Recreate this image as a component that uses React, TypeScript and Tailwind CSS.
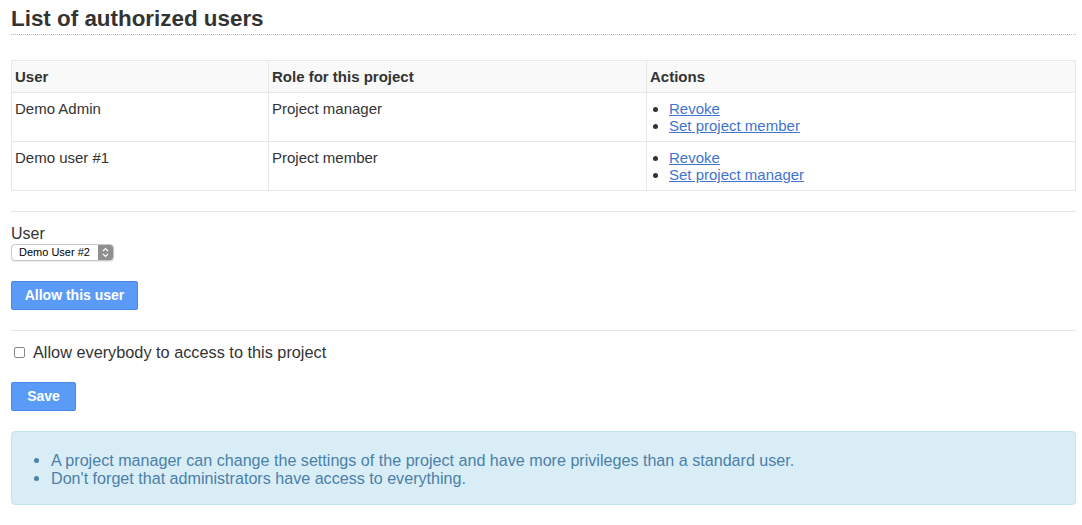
export default function App() {
  return (
    <div className="min-h-screen bg-white pl-[11px] pr-[6px] pt-[5px] text-[15px] text-[#333] font-['Liberation_Sans',Arial,sans-serif]">
      <h2 className="border-b border-dotted border-[#bbb] pb-[2px] text-[22.4px] font-bold leading-[27px] text-[#333]">
        List of authorized users
      </h2>

      <table className="mt-[25px] w-full border-collapse border border-[#e8e8e8] leading-[17px]">
        <thead>
          <tr className="bg-[#f9f9f9]">
            <th className="w-[257px] border border-[#e8e8e8] px-[3px] py-[7px] text-left font-bold">User</th>
            <th className="w-[378px] border border-[#e8e8e8] px-[3px] py-[7px] text-left font-bold">Role for this project</th>
            <th className="border border-[#e8e8e8] px-[3px] py-[7px] text-left font-bold">Actions</th>
          </tr>
        </thead>
        <tbody>
          <tr>
            <td className="border border-[#e8e8e8] px-[3px] pt-[7px] pb-[7px] align-top">Demo Admin</td>
            <td className="border border-[#e8e8e8] px-[3px] pt-[7px] pb-[7px] align-top">Project manager</td>
            <td className="border border-[#e8e8e8] px-[3px] pt-[7px] pb-[7px] align-top">
              <ul className="list-disc pl-[19px]">
                <li><a href="#" className="text-[#3f74d0] underline">Revoke</a></li>
                <li><a href="#" className="text-[#3f74d0] underline">Set project member</a></li>
              </ul>
            </td>
          </tr>
          <tr>
            <td className="border border-[#e8e8e8] px-[3px] pt-[7px] pb-[7px] align-top">Demo user #1</td>
            <td className="border border-[#e8e8e8] px-[3px] pt-[7px] pb-[7px] align-top">Project member</td>
            <td className="border border-[#e8e8e8] px-[3px] pt-[7px] pb-[7px] align-top">
              <ul className="list-disc pl-[19px]">
                <li><a href="#" className="text-[#3f74d0] underline">Revoke</a></li>
                <li><a href="#" className="text-[#3f74d0] underline">Set project manager</a></li>
              </ul>
            </td>
          </tr>
        </tbody>
      </table>

      <hr className="mt-[20px] border-[#e5e5e5]" />

      <div className="mt-[13px] text-[16px] leading-[18px]">User</div>
      <div className="mt-[1px] flex h-[17px] w-[103px] items-center overflow-hidden rounded-[4px] border border-[#c8c8c8] bg-white shadow-[0_1px_1px_rgba(0,0,0,0.08)]">
        <span className="flex-1 pl-[7px] text-[11px] leading-[15px] text-black">Demo User #2</span>
        <span className="flex h-full w-[15px] flex-col items-center justify-center bg-[#8f8f8f] text-white">
          <svg width="7" height="11" viewBox="0 0 7 11" fill="none" stroke="white" strokeWidth="1.2">
            <path d="M1 4l2.5-2.5L6 4" />
            <path d="M1 7l2.5 2.5L6 7" />
          </svg>
        </span>
      </div>

      <button className="mt-[20px] flex h-[29px] w-[127px] items-center justify-center rounded-[2px] border border-[#4a88e8] bg-[#5b9bf8] text-[14px] font-bold text-white">
        Allow this user
      </button>

      <hr className="mt-[20px] border-[#e5e5e5]" />

      <label className="mt-[12px] flex items-center gap-[8px] leading-[18px]">
        <span className="ml-[3px] h-[11px] w-[11px] rounded-[2px] border border-[#888] bg-white" />
        <span className="text-[16.3px]">Allow everybody to access to this project</span>
      </label>

      <button className="mt-[21px] flex h-[29px] w-[65px] items-center justify-center rounded-[2px] border border-[#4a88e8] bg-[#5b9bf8] text-[14px] font-bold text-white">
        Save
      </button>

      <div className="mt-[20px] rounded-[4px] border border-[#bce8f1] bg-[#d9edf7] pt-[19px] pb-[17px] pl-[35px] text-[16.13px] leading-[18px] text-[#4b80a8]">
        <ul className="list-disc pl-[4px]">
          <li>A project manager can change the settings of the project and have more privileges than a standard user.</li>
          <li>Don't forget that administrators have access to everything.</li>
        </ul>
      </div>
    </div>
  );
}
